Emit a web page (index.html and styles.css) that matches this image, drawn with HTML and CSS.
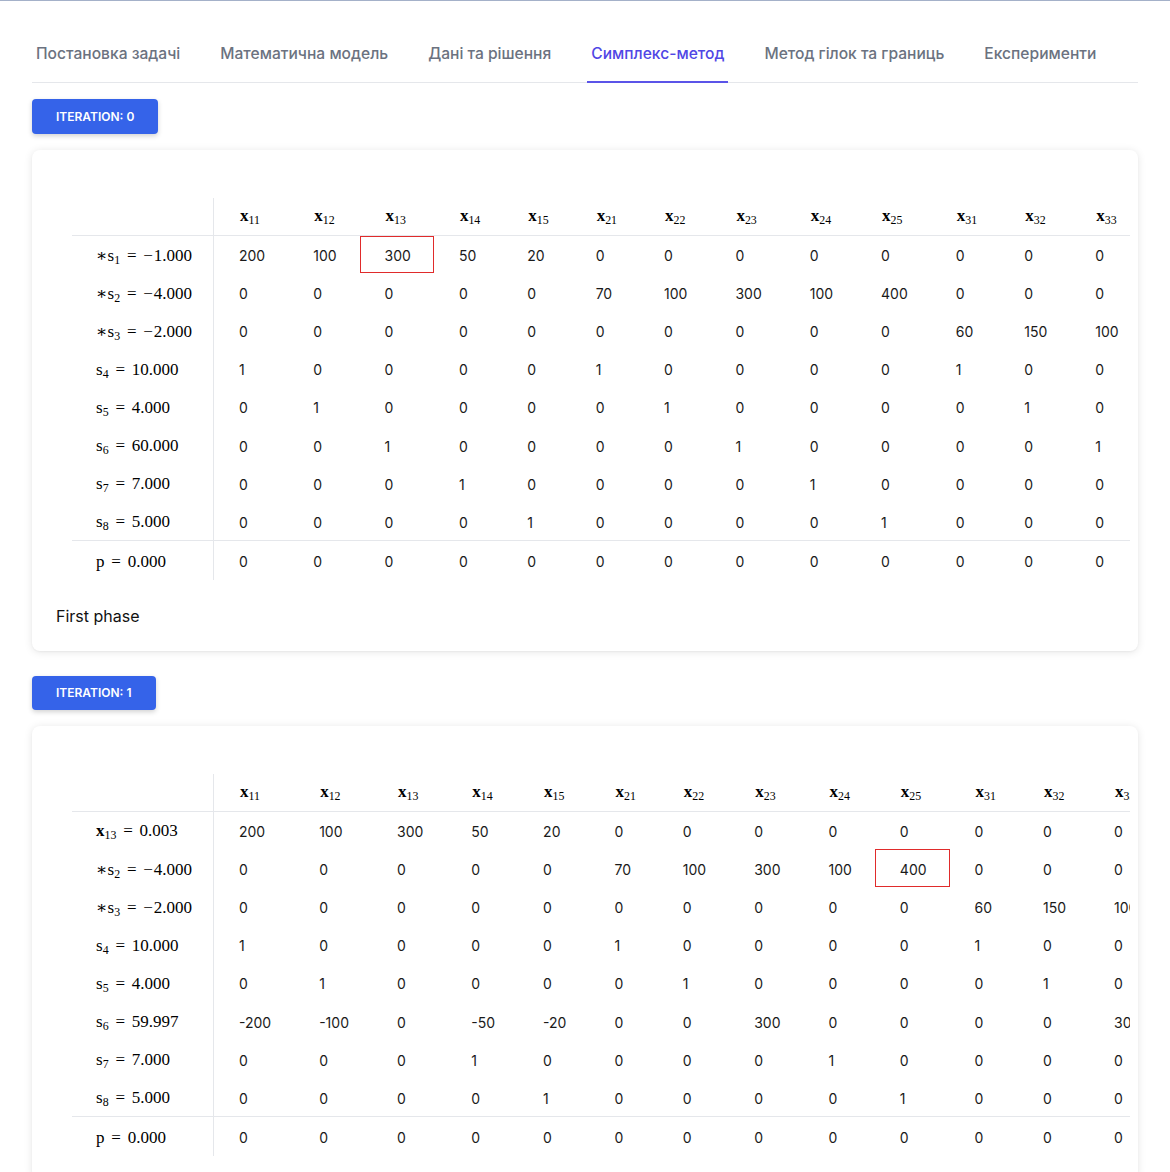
FILE: index.html
```html
<!DOCTYPE html>
<html lang="uk">
<head>
<meta charset="utf-8">
<title>Симплекс-метод</title>
<link rel="stylesheet" href="styles.css">
</head>
<body>
<div class="page">
  <nav class="tabs">
    <div class="tab">Постановка задачі</div>
    <div class="tab">Математична модель</div>
    <div class="tab">Дані та рішення</div>
    <div class="tab active">Симплекс-метод</div>
    <div class="tab">Метод гілок та границь</div>
    <div class="tab">Експерименти</div>
  </nav>

  <section class="iteration">
    <div class="btn">Iteration: 0</div>
    <div class="card">
      <div class="table-wrap">
        <table>
          <thead>
            <tr>
              <th class="lbl"></th>
              <th><span class="m"><b>x</b><sub>11</sub></span></th>
              <th><span class="m"><b>x</b><sub>12</sub></span></th>
              <th><span class="m"><b>x</b><sub>13</sub></span></th>
              <th><span class="m"><b>x</b><sub>14</sub></span></th>
              <th><span class="m"><b>x</b><sub>15</sub></span></th>
              <th><span class="m"><b>x</b><sub>21</sub></span></th>
              <th><span class="m"><b>x</b><sub>22</sub></span></th>
              <th><span class="m"><b>x</b><sub>23</sub></span></th>
              <th><span class="m"><b>x</b><sub>24</sub></span></th>
              <th><span class="m"><b>x</b><sub>25</sub></span></th>
              <th><span class="m"><b>x</b><sub>31</sub></span></th>
              <th><span class="m"><b>x</b><sub>32</sub></span></th>
              <th><span class="m"><b>x</b><sub>33</sub></span></th>
            </tr>
          </thead>
          <tbody>
            <tr><td class="lbl"><span class="m">∗s<sub>1</sub><span class="rel">=</span><span class="neg">−</span>1.000</span></td><td>200</td><td>100</td><td class="pivot">300</td><td>50</td><td>20</td><td>0</td><td>0</td><td>0</td><td>0</td><td>0</td><td>0</td><td>0</td><td>0</td></tr>
            <tr><td class="lbl"><span class="m">∗s<sub>2</sub><span class="rel">=</span><span class="neg">−</span>4.000</span></td><td>0</td><td>0</td><td>0</td><td>0</td><td>0</td><td>70</td><td>100</td><td>300</td><td>100</td><td>400</td><td>0</td><td>0</td><td>0</td></tr>
            <tr><td class="lbl"><span class="m">∗s<sub>3</sub><span class="rel">=</span><span class="neg">−</span>2.000</span></td><td>0</td><td>0</td><td>0</td><td>0</td><td>0</td><td>0</td><td>0</td><td>0</td><td>0</td><td>0</td><td>60</td><td>150</td><td>100</td></tr>
            <tr><td class="lbl"><span class="m">s<sub>4</sub><span class="rel">=</span>10.000</span></td><td>1</td><td>0</td><td>0</td><td>0</td><td>0</td><td>1</td><td>0</td><td>0</td><td>0</td><td>0</td><td>1</td><td>0</td><td>0</td></tr>
            <tr><td class="lbl"><span class="m">s<sub>5</sub><span class="rel">=</span>4.000</span></td><td>0</td><td>1</td><td>0</td><td>0</td><td>0</td><td>0</td><td>1</td><td>0</td><td>0</td><td>0</td><td>0</td><td>1</td><td>0</td></tr>
            <tr><td class="lbl"><span class="m">s<sub>6</sub><span class="rel">=</span>60.000</span></td><td>0</td><td>0</td><td>1</td><td>0</td><td>0</td><td>0</td><td>0</td><td>1</td><td>0</td><td>0</td><td>0</td><td>0</td><td>1</td></tr>
            <tr><td class="lbl"><span class="m">s<sub>7</sub><span class="rel">=</span>7.000</span></td><td>0</td><td>0</td><td>0</td><td>1</td><td>0</td><td>0</td><td>0</td><td>0</td><td>1</td><td>0</td><td>0</td><td>0</td><td>0</td></tr>
            <tr><td class="lbl"><span class="m">s<sub>8</sub><span class="rel">=</span>5.000</span></td><td>0</td><td>0</td><td>0</td><td>0</td><td>1</td><td>0</td><td>0</td><td>0</td><td>0</td><td>1</td><td>0</td><td>0</td><td>0</td></tr>
            <tr class="obj"><td class="lbl"><span class="m">p<span class="rel">=</span>0.000</span></td><td>0</td><td>0</td><td>0</td><td>0</td><td>0</td><td>0</td><td>0</td><td>0</td><td>0</td><td>0</td><td>0</td><td>0</td><td>0</td></tr>
          </tbody>
        </table>
      </div>
      <p class="phase">First phase</p>
    </div>
  </section>

  <section class="iteration">
    <div class="btn">Iteration: 1</div>
    <div class="card">
      <div class="table-wrap">
        <table>
          <thead>
            <tr>
              <th class="lbl"></th>
              <th><span class="m"><b>x</b><sub>11</sub></span></th>
              <th><span class="m"><b>x</b><sub>12</sub></span></th>
              <th><span class="m"><b>x</b><sub>13</sub></span></th>
              <th><span class="m"><b>x</b><sub>14</sub></span></th>
              <th><span class="m"><b>x</b><sub>15</sub></span></th>
              <th><span class="m"><b>x</b><sub>21</sub></span></th>
              <th><span class="m"><b>x</b><sub>22</sub></span></th>
              <th><span class="m"><b>x</b><sub>23</sub></span></th>
              <th><span class="m"><b>x</b><sub>24</sub></span></th>
              <th><span class="m"><b>x</b><sub>25</sub></span></th>
              <th><span class="m"><b>x</b><sub>31</sub></span></th>
              <th><span class="m"><b>x</b><sub>32</sub></span></th>
              <th><span class="m"><b>x</b><sub>33</sub></span></th>
            </tr>
          </thead>
          <tbody>
            <tr><td class="lbl"><span class="m"><b>x</b><sub>13</sub><span class="rel">=</span>0.003</span></td><td>200</td><td>100</td><td>300</td><td>50</td><td>20</td><td>0</td><td>0</td><td>0</td><td>0</td><td>0</td><td>0</td><td>0</td><td>0</td></tr>
            <tr><td class="lbl"><span class="m">∗s<sub>2</sub><span class="rel">=</span><span class="neg">−</span>4.000</span></td><td>0</td><td>0</td><td>0</td><td>0</td><td>0</td><td>70</td><td>100</td><td>300</td><td>100</td><td class="pivot">400</td><td>0</td><td>0</td><td>0</td></tr>
            <tr><td class="lbl"><span class="m">∗s<sub>3</sub><span class="rel">=</span><span class="neg">−</span>2.000</span></td><td>0</td><td>0</td><td>0</td><td>0</td><td>0</td><td>0</td><td>0</td><td>0</td><td>0</td><td>0</td><td>60</td><td>150</td><td>100</td></tr>
            <tr><td class="lbl"><span class="m">s<sub>4</sub><span class="rel">=</span>10.000</span></td><td>1</td><td>0</td><td>0</td><td>0</td><td>0</td><td>1</td><td>0</td><td>0</td><td>0</td><td>0</td><td>1</td><td>0</td><td>0</td></tr>
            <tr><td class="lbl"><span class="m">s<sub>5</sub><span class="rel">=</span>4.000</span></td><td>0</td><td>1</td><td>0</td><td>0</td><td>0</td><td>0</td><td>1</td><td>0</td><td>0</td><td>0</td><td>0</td><td>1</td><td>0</td></tr>
            <tr><td class="lbl"><span class="m">s<sub>6</sub><span class="rel">=</span>59.997</span></td><td>-200</td><td>-100</td><td>0</td><td>-50</td><td>-20</td><td>0</td><td>0</td><td>300</td><td>0</td><td>0</td><td>0</td><td>0</td><td>300</td></tr>
            <tr><td class="lbl"><span class="m">s<sub>7</sub><span class="rel">=</span>7.000</span></td><td>0</td><td>0</td><td>0</td><td>1</td><td>0</td><td>0</td><td>0</td><td>0</td><td>1</td><td>0</td><td>0</td><td>0</td><td>0</td></tr>
            <tr><td class="lbl"><span class="m">s<sub>8</sub><span class="rel">=</span>5.000</span></td><td>0</td><td>0</td><td>0</td><td>0</td><td>1</td><td>0</td><td>0</td><td>0</td><td>0</td><td>1</td><td>0</td><td>0</td><td>0</td></tr>
            <tr class="obj"><td class="lbl"><span class="m">p<span class="rel">=</span>0.000</span></td><td>0</td><td>0</td><td>0</td><td>0</td><td>0</td><td>0</td><td>0</td><td>0</td><td>0</td><td>0</td><td>0</td><td>0</td><td>0</td></tr>
          </tbody>
        </table>
      </div>
    </div>
  </section>
</div>
</body>
</html>
```

FILE: styles.css
```css
* { box-sizing: border-box; }

body {
  margin: 0;
  font-family: Inter, "Noto Sans", sans-serif;
  color: #111;
  background: #fff;
  border-top: 1px solid #a4b1c9;
}

.page {
  padding: 30px 32px 40px;
}

.tabs {
  display: flex;
  gap: 32px;
  border-bottom: 1px solid #e5e7eb;
}

.tab {
  padding: 11px 4px 15px;
  margin-bottom: -1px;
  border-bottom: 2px solid transparent;
  font-size: 15.6px;
  line-height: 24px;
  font-weight: 500;
  color: #6b7280;
  white-space: nowrap;
}

.tab.active {
  color: #5046e5;
  border-bottom-color: #5b54e8;
}

.iteration {
  display: flex;
  flex-direction: column;
  align-items: flex-start;
}

.iteration + .iteration {
  margin-top: 25px;
}

.btn {
  margin-top: 16px;
  height: 35px;
  line-height: 35px;
  padding: 0 24px;
  background: #3563e9;
  color: #fff;
  font-size: 12px;
  font-weight: 600;
  letter-spacing: 0;
  text-transform: uppercase;
  border-radius: 4px;
  box-shadow: 0 2px 5px rgba(0, 0, 0, 0.18);
}

.iteration + .iteration .btn {
  margin-top: 0;
  height: 34px;
  line-height: 34px;
}

.card {
  align-self: stretch;
  margin-top: 16px;
  padding: 48px 8px 23px 24px;
  background: #fff;
  border-radius: 8px;
  box-shadow: 0 1px 8px rgba(0, 0, 0, 0.10), 0 1px 2px rgba(0, 0, 0, 0.04);
}

.table-wrap {
  margin-left: 16px;
  overflow: hidden;
}

table {
  border-collapse: collapse;
  width: 100%;
}

th, td {
  height: 38.2px;
  padding: 2px 23px 0 25px;
  text-align: left;
  white-space: nowrap;
  font-size: 14px;
  font-weight: 400;
  color: #1a1a1a;
}

thead th {
  height: 37px;
  padding: 0 22px 0 26px;
  border-bottom: 1px solid #e5e7eb;
}

.lbl,
thead th.lbl {
  padding: 2px 21px 0 24px;
  border-right: 1px solid #e5e7eb;
}

tr.obj td {
  height: 39.5px;
  border-top: 1px solid #e5e7eb;
}

td.pivot {
  box-shadow: inset 0 0 0 1px #e02b2b;
}

.m {
  font-family: "Liberation Serif", "DejaVu Serif", serif;
  font-size: 17px;
  color: #000;
}

.m b {
  font-weight: 700;
}

.m sub {
  font-size: 0.7em;
  line-height: 0;
  vertical-align: -0.25em;
}

.rel {
  padding: 0 0.4em;
}

.neg {
  padding-right: 0.05em;
}

.phase {
  margin: 24px 0 0;
  font-size: 16px;
  line-height: 24px;
  color: #111;
}
```
